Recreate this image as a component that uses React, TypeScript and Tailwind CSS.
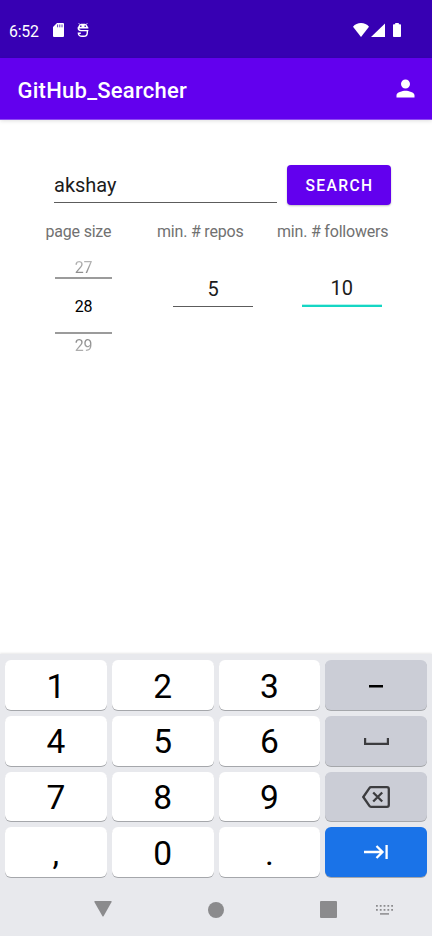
import React from 'react';

const keyBase = 'flex items-center justify-center rounded-[6px] shadow-[0_1px_0.5px_#a5a7ab]';

function NumKey({ label }: { label: string }) {
  return (
    <button className={`${keyBase} bg-white pt-[3px] text-[33.5px] leading-none text-black`}>{label}</button>
  );
}

function SideKey({ children }: { children: React.ReactNode }) {
  return <button className={`${keyBase} bg-[#cbcdd6]`}>{children}</button>;
}

function StatusBar() {
  return (
    <div className="flex h-[58px] shrink-0 items-start bg-[#3700b3] pt-[23px] text-white">
      <span className="ml-[9px] w-[44px] pt-[1px] text-[15.8px] leading-[16px] tracking-[-0.2px]">6:52</span>
      <svg className="h-[14px] w-[11px]" viewBox="0 0 11 14">
        <path fill="#fff" d="M4 0h6a1 1 0 0 1 1 1v12a1 1 0 0 1-1 1H1a1 1 0 0 1-1-1V4z" />
        <path stroke="#3700b3" strokeWidth=".8" d="M4.600 1.500v2.800M6.800 1.500v2.800M9 1.500v2.800" />
      </svg>
      <svg className="ml-[13px] h-[14px] w-[12px]" viewBox="0 0 12 14" fill="none" stroke="#fff" strokeWidth="1.400">
        <path fill="#fff" stroke="none" d="M1 5C1 2.800 2.600 1.200 4 .7h4C9.400 1.200 11 2.800 11 5z" />
        <path strokeWidth="1" d="M2.800 1.500 1.800.3M9.200 1.500 10.200.3" />
        <path d="M1.200 4.500C1.200 6.800 2.200 7.600 4 7.600h6.300v2.200c0 2.300-1.200 3.500-3.400 3.500H5c-2.200 0-3.600-1-3.600-3h2.400M.6 4.900h10.800M7.500 7.600h3.900" />
        <path stroke="#3700b3" strokeWidth="1.300" d="M3.800 2.600v1.400M8.200 2.600v1.400" />
      </svg>
      <svg className="ml-[264px] h-[14px] w-[16px]" viewBox="0 0 16 14">
        <path fill="#fff" d="M8 14 0 3.700C2 1.300 4.800 0 8 0s6 1.300 8 3.700z" />
      </svg>
      <svg className="ml-[1.500px] h-[14px] w-[14px]" viewBox="0 0 14 14">
        <path fill="#fff" d="M14 .5V14H0z" />
      </svg>
      <svg className="ml-[8px] h-[14px] w-[8px]" viewBox="0 0 8 14">
        <path fill="#fff" d="M2.200 0h3.600v1.200h1.400a.8.800 0 0 1 .8.800v11.200a.8.800 0 0 1-.8.800H.8a.8.800 0 0 1-.8-.8V2a.8.800 0 0 1 .8-.8h1.400z" />
      </svg>
    </div>
  );
}

export default function App() {
  return (
    <div className="flex h-[936px] w-[432px] flex-col overflow-hidden bg-white font-[Roboto,sans-serif] text-[#1c1c1c]">
      <StatusBar />
      <header className="flex h-[62px] shrink-0 items-center justify-between border-b border-[#8f4af2] bg-[#6200ee] pr-[13px] pl-[17.500px] text-white shadow-[0_1px_4px_#00000020]">
        <h1 className="pt-[4px] text-[22px] leading-[26px] font-medium tracking-[0.250px]">GitHub_Searcher</h1>
        <svg className="size-[27px]" viewBox="0 0 24 24" fill="#fff">
          <path d="M12 12c2.210 0 4-1.790 4-4s-1.790-4-4-4-4 1.790-4 4 1.790 4 4 4zm0 2c-2.670 0-8 1.340-8 4v2h16v-2c0-2.660-5.330-4-8-4z" />
        </svg>
      </header>

      <main className="h-[534px] shrink-0">
        <div className="mt-[45px] flex h-[40px] pl-[54px]">
          <div className="h-[38px] w-[223px] border-b border-[#5c5c5c] pt-[8px] text-[20px] leading-[24px]">akshay</div>
          <button className="ml-[10px] h-[40px] w-[104px] rounded-[4px] bg-[#6200ee] pt-[3px] pl-[1px] text-[15.600px] font-medium tracking-[1.400px] text-white shadow-[0_1px_2px_#00000040]">SEARCH</button>
        </div>
        <div className="mt-[17px] flex text-[16px] leading-[20px] tracking-[-0.200px] text-[#717171]">
          <span className="ml-[45.500px] w-[111.500px]">page size</span>
          <span className="w-[120px]">min. # repos</span>
          <span className="whitespace-nowrap">min. # followers</span>
        </div>
        <div className="mt-[17px] flex items-start pl-[55px] text-center">
          <div className="w-[57px] text-[16px] leading-[18px] tracking-[-0.300px]">
            <div className="h-[18px] bg-gradient-to-b from-[#bcbcbc] to-[#808080] bg-clip-text text-transparent">27</div>
            <div className="flex h-[57px] items-center justify-center border-y-[2px] border-[#9b9b9b] pt-[2px] text-black">28</div>
            <div className="mt-[3px] bg-gradient-to-b from-[#808080] to-[#bcbcbc] bg-clip-text text-transparent">29</div>
          </div>
          <div className="mt-[17px] ml-[61px] h-[31px] w-[80px] border-b border-[#5c5c5c] text-[20px] leading-[27px]">5</div>
          <div className="mt-[17px] ml-[48.500px] h-[31px] w-[80.500px] border-b-2 border-[#15d6c4] text-[20px] leading-[25px] shadow-[inset_0_-1px_0_#b5f3ec]">10</div>
        </div>
      </main>

      <section className="grow bg-[#e8e9ed] px-[5px] pt-[6px] shadow-[0_-1px_2px_#00000018]">
        <div className="grid h-[217px] grid-cols-4 grid-rows-4 gap-x-[5px] gap-y-[6px]">
          <NumKey label="1" />
          <NumKey label="2" />
          <NumKey label="3" />
          <SideKey>
            <svg className="mt-[3px] h-[3px] w-[14px]" viewBox="0 0 14 3"><path d="M0 0h14v2.500H0z" /></svg>
          </SideKey>
          <NumKey label="4" />
          <NumKey label="5" />
          <NumKey label="6" />
          <SideKey>
            <svg className="mt-[1px] h-[7px] w-[25px]" viewBox="0 0 25 7" fill="none" stroke="#3c3c3f" strokeWidth="2.200"><path d="M1.100 0v5.900h22.800V0" /></svg>
          </SideKey>
          <NumKey label="7" />
          <NumKey label="8" />
          <NumKey label="9" />
          <SideKey>
            <svg className="mt-[2px] h-[22px] w-[28px]" viewBox="0 0 28 22" fill="none" stroke="#3c3c3f" strokeWidth="2.300">
              <path d="M9 1.200h16a1.800 1.800 0 0 1 1.800 1.800v16a1.800 1.800 0 0 1-1.800 1.800H9c-.7 0-1.200-.3-1.600-.9L1.300 11l6.100-8.900C7.800 1.500 8.300 1.200 9 1.200z" />
              <path d="m11.200 6.500 9 9m0-9-9 9" />
            </svg>
          </SideKey>
          <NumKey label="," />
          <NumKey label="0" />
          <NumKey label="." />
          <button className={`${keyBase} bg-[#1a73e8]`}>
            <svg className="h-[14px] w-[24px]" viewBox="0 0 24 14" fill="none" stroke="#fff" strokeWidth="2.300">
              <path d="M0 7h18.500M12.500 1l6 6-6 6M22.600 0v14" />
            </svg>
          </button>
        </div>
        <nav className="flex h-[65px] items-center pl-[89px]">
          <svg className="mt-[-2px] h-[16px] w-[18px]" viewBox="0 0 18 16"><path fill="#8b8b8d" d="M1 0h16q1 0 .6 1L9.700 15q-.7 1-1.400 0L.4 1Q0 0 1 0z" /></svg>
          <div className="ml-[96px] size-[16px] rounded-full bg-[#8b8b8d]" />
          <div className="ml-[96px] size-[17px] rounded-[1px] bg-[#8b8b8d]" />
          <svg className="ml-[39px] h-[10px] w-[17px]" viewBox="0 0 17 10" fill="none" stroke="#8b8b8d">
            <path strokeWidth="1.800" strokeDasharray="1.800 2" d="M0 .9h17M0 4.900h17" />
            <path strokeWidth="1.500" d="M4 8.900h9" />
          </svg>
        </nav>
      </section>
    </div>
  );
}
